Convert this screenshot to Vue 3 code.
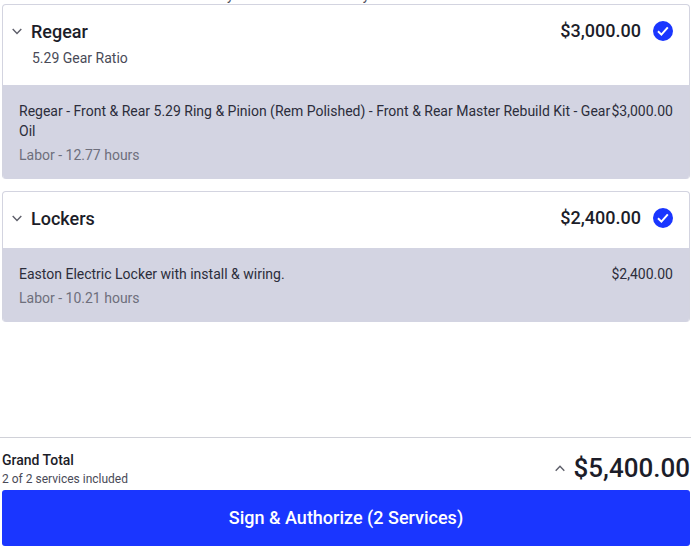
<script setup>
import { computed, ref } from 'vue';

const services = ref([
  {
    id: 1,
    name: 'Regear',
    note: '5.29 Gear Ratio',
    price: 3000,
    selected: true,
    description:
      'Regear - Front & Rear 5.29 Ring & Pinion (Rem Polished) - Front & Rear Master Rebuild Kit - Gear Oil',
    hours: 12.77,
  },
  {
    id: 2,
    name: 'Lockers',
    note: '',
    price: 2400,
    selected: true,
    description: 'Easton Electric Locker with install & wiring.',
    hours: 10.21,
  },
]);

const included = computed(() => services.value.filter((s) => s.selected));
const total = computed(() => included.value.reduce((sum, s) => sum + s.price, 0));

const money = (value) =>
  value.toLocaleString('en-US', { style: 'currency', currency: 'USD' });
</script>

<template>
  <div class="estimate">
    <div class="intro"><span>y</span><span>y</span></div>

    <div class="services">
      <section class="card" v-for="service in services" :key="service.id">
        <header class="card-header">
          <svg class="chevron" viewBox="0 0 10 7">
            <path d="M0.7 0.9 L5 5.4 L9.3 0.9" />
          </svg>
          <div class="heading">
            <h2>{{ service.name }}</h2>
            <p v-if="service.note">{{ service.note }}</p>
          </div>
          <span class="price">{{ money(service.price) }}</span>
          <svg class="check" viewBox="0 0 20 20" @click="service.selected = !service.selected">
            <circle cx="10" cy="10" r="10" />
            <path v-if="service.selected" d="M5 10.3 L8.4 13.6 L14.8 6.4" />
          </svg>
        </header>

        <div class="details">
          <div class="line">
            <span>{{ service.description }}</span>
            <span>{{ money(service.price) }}</span>
          </div>
          <div class="labor">Labor - {{ service.hours }} hours</div>
        </div>
      </section>
    </div>

    <footer class="footer">
      <div class="summary">
        <div>
          <div class="total-label">Grand Total</div>
          <div class="count">{{ included.length }} of {{ services.length }} services included</div>
        </div>
        <div class="total">
          <svg class="chevron" viewBox="0 0 10 7">
            <path d="M0.7 5.7 L5 1.2 L9.3 5.7" />
          </svg>
          <span>{{ money(total) }}</span>
        </div>
      </div>
      <button class="button">Sign &amp; Authorize ({{ included.length }} Services)</button>
    </footer>
  </div>
</template>

<style>
body {
  margin: 0;
  background: #fff;
}
</style>

<style scoped>
.estimate {
  height: 548px;
  display: flex;
  flex-direction: column;
  overflow: hidden;
  font-family: Roboto, "Liberation Sans", sans-serif;
  color: #1c1d29;
}

.intro {
  display: flex;
  align-items: flex-end;
  gap: 129px;
  height: 4px;
  padding-left: 227px;
  overflow: hidden;
  font-size: 14px;
  line-height: 17px;
  color: #4b4c59;
}

.services {
  flex: 1;
  display: flex;
  flex-direction: column;
  gap: 12px;
  padding: 0 1px 0 2px;
}

.card {
  border: 1px solid #d3d4e0;
  border-bottom: 0;
  border-radius: 4px;
  overflow: hidden;
}

.card-header {
  display: flex;
  align-items: flex-start;
  padding: 16px 16px 16px 9px;
}

.chevron {
  flex: none;
  width: 10px;
  height: 7px;
  fill: none;
  stroke: #5d5e69;
  stroke-width: 1.4;
}

.card-header .chevron {
  margin: 7px 9px 0 0;
}

.heading {
  flex: 1;
}

h2 {
  margin: 0;
  padding-bottom: 2px;
  font-size: 18px;
  font-weight: 500;
  line-height: 22px;
}

p {
  margin: 3px 0 1px 1px;
  font-size: 14px;
  line-height: 20px;
  color: #494a57;
}

.price {
  font-size: 18px;
  font-weight: 500;
  line-height: 20px;
}

.check {
  width: 20px;
  height: 20px;
  margin-left: 12px;
  fill: #1a36ff;
}

.check path {
  fill: none;
  stroke: #fff;
  stroke-width: 2;
}

.details {
  padding: 16px 16px 14px;
  background: #d3d4e2;
  font-size: 14px;
  line-height: 20px;
  color: #2c2d3b;
}

.line {
  display: flex;
  justify-content: space-between;
}

.labor {
  margin-top: 4px;
  color: #6e6f7c;
}

.footer {
  border-top: 1px solid #d0d1d8;
  padding-bottom: 2px;
}

.summary {
  display: flex;
  justify-content: space-between;
  height: 52px;
  padding: 0 1px 0 2px;
}

.total-label {
  margin-top: 12px;
  font-size: 14px;
  font-weight: 500;
  line-height: 20px;
}

.count {
  font-size: 12px;
  line-height: 18px;
  color: #494a57;
}

.total {
  display: flex;
  align-items: center;
  gap: 9px;
  padding-top: 8px;
  font-size: 26px;
  font-weight: 500;
}

.button {
  display: block;
  width: 688px;
  height: 56px;
  margin-left: 2px;
  padding: 0 0 2px;
  border: 0;
  border-radius: 3px;
  background: #1a36ff;
  color: #fff;
  font: inherit;
  font-size: 18px;
  font-weight: 500;
}
</style>
